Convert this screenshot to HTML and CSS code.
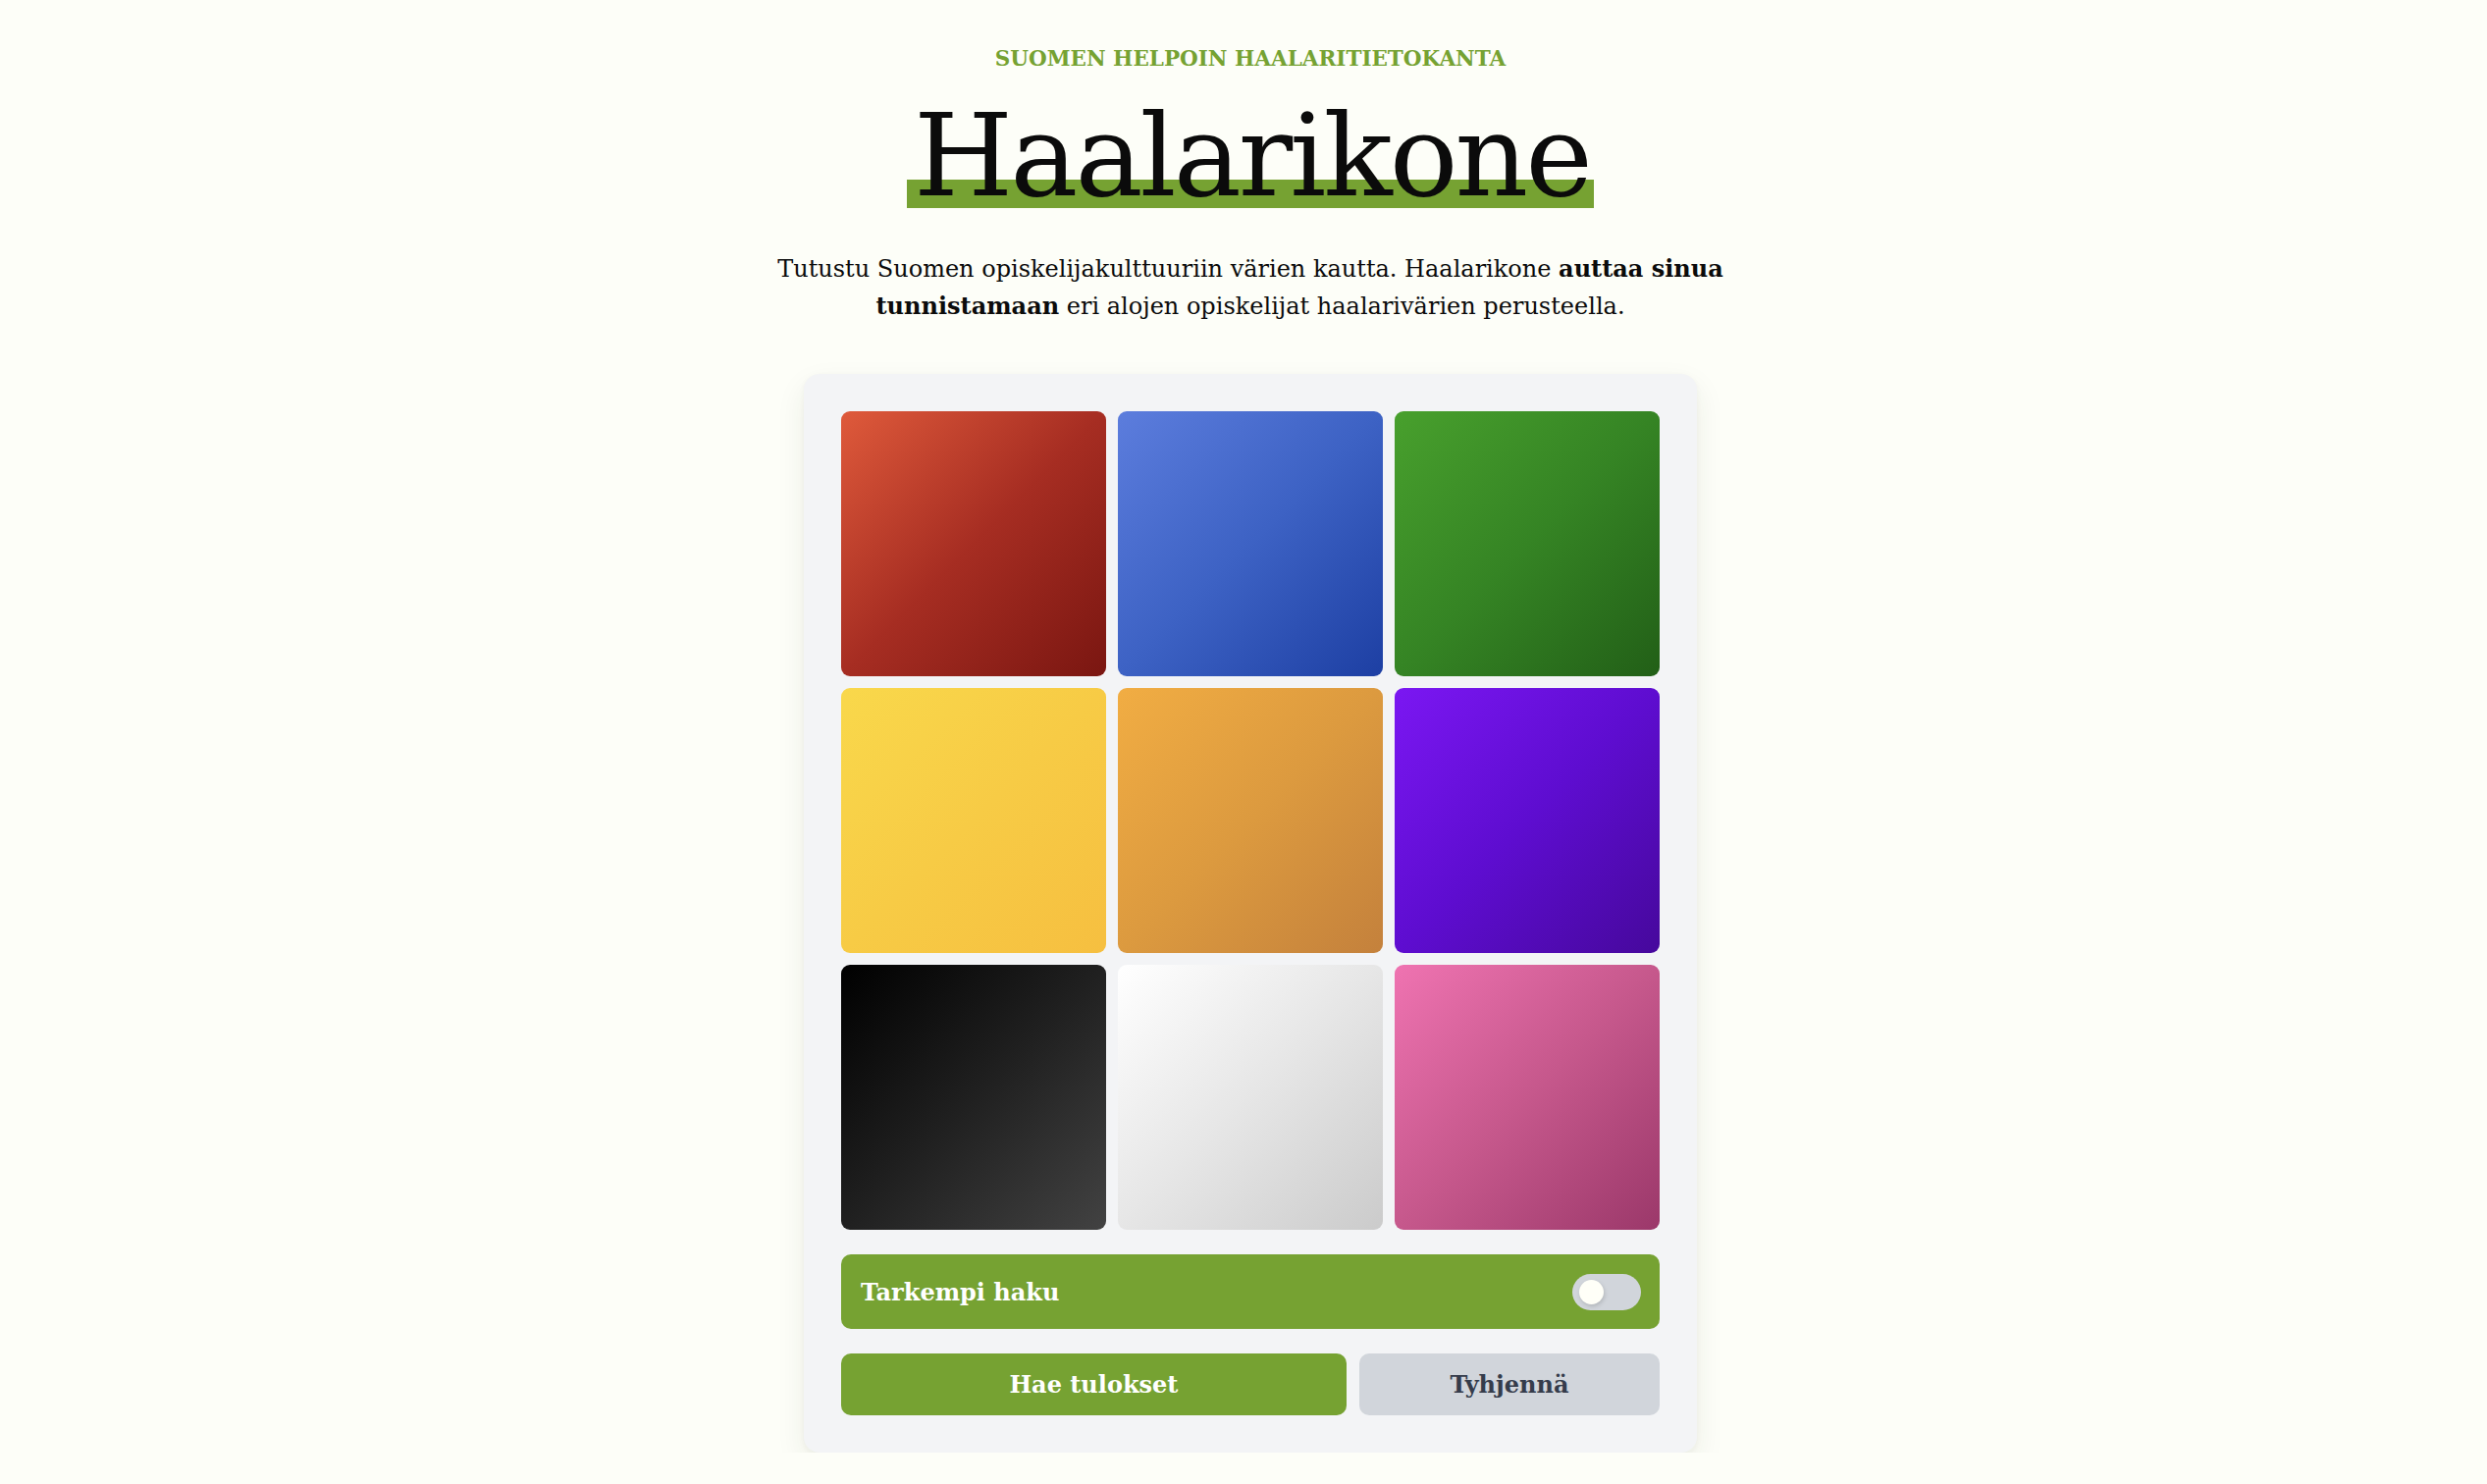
FILE: index.html
```html
<!DOCTYPE html>
<html lang="fi">
<head>
<meta charset="utf-8">
<title>Haalarikone</title>
<link rel="stylesheet" href="styles.css">
</head>
<body>
<main class="page">
  <header class="hero">
    <p class="eyebrow">Suomen helpoin haalaritietokanta</p>
    <h1 class="title"><span class="title-mark">Haalarikone</span></h1>
    <p class="lead">Tutustu Suomen opiskelijakulttuuriin värien kautta. Haalarikone <strong>auttaa sinua</strong> <strong>tunnistamaan</strong> eri alojen opiskelijat haalarivärien perusteella.</p>
  </header>

  <section class="card">
    <div class="swatches">
      <button class="swatch swatch-red" aria-label="Punainen"></button>
      <button class="swatch swatch-blue" aria-label="Sininen"></button>
      <button class="swatch swatch-green" aria-label="Vihreä"></button>
      <button class="swatch swatch-yellow" aria-label="Keltainen"></button>
      <button class="swatch swatch-orange" aria-label="Oranssi"></button>
      <button class="swatch swatch-purple" aria-label="Violetti"></button>
      <button class="swatch swatch-black" aria-label="Musta"></button>
      <button class="swatch swatch-white" aria-label="Valkoinen"></button>
      <button class="swatch swatch-pink" aria-label="Pinkki"></button>
    </div>

    <div class="advanced">
      <span class="advanced-label">Tarkempi haku</span>
      <span class="toggle"><span class="toggle-knob"></span></span>
    </div>

    <div class="actions">
      <button class="btn btn-primary">Hae tulokset</button>
      <button class="btn btn-secondary">Tyhjennä</button>
    </div>
  </section>
</main>
</body>
</html>
```

FILE: styles.css
```css
* { box-sizing: border-box; }

html, body {
  margin: 0;
  padding: 0;
}

body {
  background: #fdfef8;
  color: #0b0b0b;
  font-family: "DejaVu Serif", "Liberation Serif", serif;
}

.page {
  display: flex;
  flex-direction: column;
  align-items: center;
  padding: 46px 0 0 14px;
}

.hero {
  display: flex;
  flex-direction: column;
  align-items: center;
  text-align: center;
}

.eyebrow {
  margin: 0;
  font-size: 21.5px;
  line-height: 28px;
  font-weight: 700;
  text-transform: uppercase;
  color: #76a232;
  letter-spacing: 0;
}

.title {
  margin: 27px 0 0;
  font-size: 116px;
  line-height: 116px;
  font-weight: 400;
  letter-spacing: -3px;
}

.title-mark {
  position: relative;
  display: inline-block;
  isolation: isolate;
  padding: 0 4px 0 7px;
}

.title-mark::after {
  content: "";
  position: absolute;
  left: 0;
  right: 0;
  bottom: 5px;
  height: 29px;
  background: #76a232;
  z-index: -1;
}

.lead {
  margin: 38px 0 0;
  max-width: 1010px;
  font-size: 24px;
  line-height: 37px;
}

.lead strong { font-weight: 700; }

.card {
  margin-top: 50px;
  width: 910px;
  padding: 38px;
  background: #f3f4f6;
  border-radius: 16px;
  box-shadow: 0 12px 30px rgba(40, 45, 20, 0.08), 0 2px 6px rgba(40, 45, 20, 0.04);
}

.swatches {
  display: grid;
  grid-template-columns: repeat(3, 1fr);
  gap: 12px;
}

.swatch {
  display: block;
  aspect-ratio: 1 / 1;
  border: 0;
  padding: 0;
  border-radius: 9px;
  cursor: pointer;
}

.swatch-red { background: linear-gradient(135deg, #df5a3b 0%, #a62d22 50%, #7a1611 100%); }
.swatch-blue { background: linear-gradient(135deg, #5c7ddd 0%, #3d62c4 50%, #1d3fa3 100%); }
.swatch-green { background: linear-gradient(135deg, #48a02d 0%, #358424 50%, #225f17 100%); }
.swatch-yellow { background: linear-gradient(135deg, #f9d84b 0%, #f7cb45 50%, #f6bf40 100%); }
.swatch-orange { background: linear-gradient(135deg, #f1ad43 0%, #dc9a3f 50%, #c4813c 100%); }
.swatch-purple { background: linear-gradient(135deg, #7b17f2 0%, #5e0dd0 50%, #46089c 100%); }
.swatch-black { background: linear-gradient(135deg, #000000 0%, #202020 50%, #424242 100%); }
.swatch-white { background: linear-gradient(135deg, #ffffff 0%, #e6e6e6 50%, #cbcbcb 100%); }
.swatch-pink { background: linear-gradient(135deg, #ef73b1 0%, #c6588c 50%, #9b386a 100%); }

.advanced {
  margin-top: 25px;
  height: 76px;
  padding: 0 19px 0 20px;
  display: flex;
  align-items: center;
  justify-content: space-between;
  background: #76a232;
  border-radius: 10px;
}

.advanced-label {
  color: #ffffff;
  font-size: 24px;
  font-weight: 700;
}

.toggle {
  position: relative;
  width: 70px;
  height: 37px;
  border-radius: 19px;
  background: #d1d5db;
}

.toggle-knob {
  position: absolute;
  left: 7px;
  top: 6px;
  width: 25px;
  height: 25px;
  border-radius: 50%;
  background: #fffff8;
  box-shadow: 1px 2px 4px rgba(0, 0, 0, 0.15);
}

.actions {
  margin-top: 25px;
  display: flex;
  gap: 13px;
}

.btn {
  height: 63px;
  border: 0;
  border-radius: 10px;
  font-family: inherit;
  font-size: 24px;
  font-weight: 700;
  cursor: pointer;
}

.btn-primary {
  flex: 518 1 0;
  background: #76a232;
  color: #ffffff;
}

.btn-secondary {
  flex: 303 1 0;
  background: #d1d5db;
  color: #353c4b;
}
```
